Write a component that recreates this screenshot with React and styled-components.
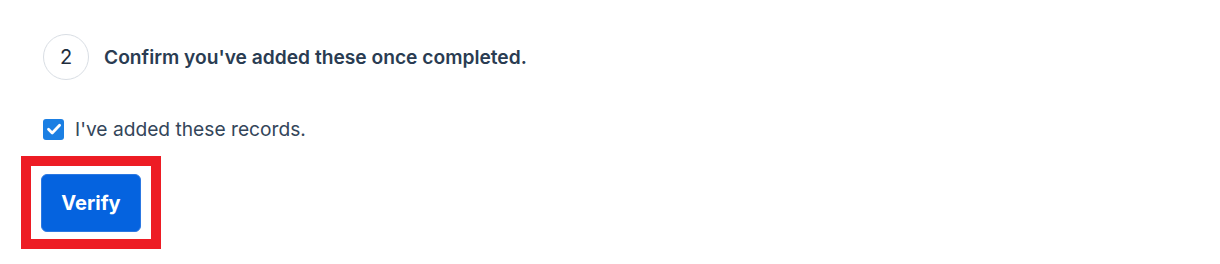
import React from 'react';
import styled, { createGlobalStyle } from 'styled-components';

const GlobalStyle = createGlobalStyle`
  html, body {
    margin: 0;
    padding: 0;
    background: #ffffff;
    font-family: Inter, "Noto Sans", "Liberation Sans", sans-serif;
  }
`;

const Page = styled.div`
  padding: 34px 0 0 21px;
`;

const StepRow = styled.div`
  display: flex;
  align-items: center;
  gap: 15px;
  margin-left: 22px;
`;

const StepNumber = styled.div`
  width: 44px;
  height: 44px;
  border: 1px solid #d9dee4;
  border-radius: 50%;
  display: flex;
  align-items: center;
  justify-content: center;
  font-size: 20px;
  color: #1f2d3d;
`;

const StepTitle = styled.h3`
  margin: 0;
  font-size: 19.2px;
  font-weight: 600;
  color: #2a3c52;
`;

const CheckRow = styled.label`
  display: flex;
  align-items: center;
  gap: 11px;
  height: 22px;
  margin: 38px 0 0 22px;
  font-size: 19.2px;
  line-height: 22px;
  color: #34465a;
`;

const Box = styled.span`
  width: 21px;
  height: 21px;
  border-radius: 3px;
  background: ${(p) => (p.checked ? '#1b7fe3' : '#fff')};
  border: ${(p) => (p.checked ? 'none' : '1px solid #9aa5b1')};
  display: flex;
  align-items: center;
  justify-content: center;
`;

const Highlight = styled.div`
  display: inline-block;
  margin-top: 16px;
  border: 10px solid #ed1c24;
  padding: 8px 10px 7px 10px;
`;

const Button = styled.button`
  width: 100px;
  height: 58px;
  border: 1px solid #2c78e2;
  border-radius: 6px;
  background: #0563df;
  color: #ffffff;
  font-family: inherit;
  font-size: 20px;
  font-weight: 700;
  display: block;
  cursor: pointer;
`;

const Check = () => (
  <svg width="16" height="16" viewBox="0 0 16 16" fill="none">
    <path d="M2.5 8.3l3.7 3.7L13.6 4.2" stroke="#fff" strokeWidth="2.8" strokeLinecap="round" strokeLinejoin="round" />
  </svg>
);

export default function App() {
  const [checked, setChecked] = React.useState(true);
  return (
    <Page>
      <GlobalStyle />
      <StepRow>
        <StepNumber>2</StepNumber>
        <StepTitle>Confirm you've added these once completed.</StepTitle>
      </StepRow>
      <CheckRow onClick={() => setChecked(!checked)}>
        <Box checked={checked}>{checked && <Check />}</Box>
        I've added these records.
      </CheckRow>
      <Highlight>
        <Button>Verify</Button>
      </Highlight>
    </Page>
  );
}
